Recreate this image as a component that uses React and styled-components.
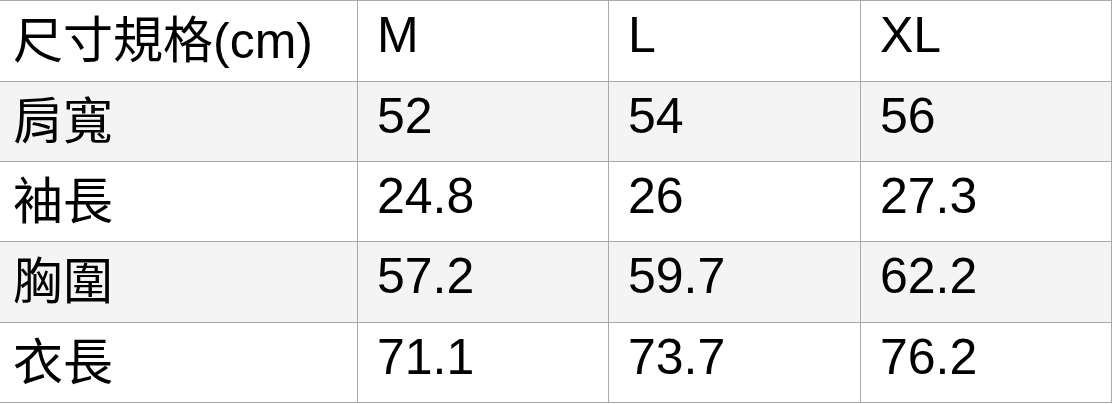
import React from "react";
import styled, { createGlobalStyle } from "styled-components";

const Global = createGlobalStyle`
  html, body { margin: 0; padding: 0; background: #ffffff; }
  body { font-family: "Liberation Sans", "Noto Sans CJK TC", sans-serif; }
`;

const Table = styled.table`
  border-collapse: separate;
  border-spacing: 0;
  table-layout: fixed;
  width: 1112px;
  color: #000;
  font-size: 50px;
`;

const Col = styled.col`
  width: ${(p) => p.$w}px;
`;

const Row = styled.tr`
  background: ${(p) => (p.$striped ? "#f4f4f4" : "#ffffff")};
`;

const Cell = styled.td`
  box-sizing: border-box;
  height: ${(p) => p.$h}px;
  padding: 0 0 ${(p) => (p.$label ? 0 : 12)}px ${(p) => (p.$label ? 13 : 19)}px;
  border-right: 1px solid #a9a9a9;
  border-bottom: 1px solid #a9a9a9;
  border-top: ${(p) => (p.$first ? "1px solid #a9a9a9" : "none")};
  vertical-align: middle;
  line-height: 60px;
  white-space: nowrap;
  font-family: ${(p) =>
    p.$label
      ? '"Liberation Sans", "Noto Sans CJK TC", sans-serif'
      : '"Liberation Sans", sans-serif'};
`;

const rows = [
  ["尺寸規格(cm)", "M", "L", "XL"],
  ["肩寬", "52", "54", "56"],
  ["袖長", "24.8", "26", "27.3"],
  ["胸圍", "57.2", "59.7", "62.2"],
  ["衣長", "71.1", "73.7", "76.2"],
];

const heights = [82, 80, 80, 81, 80];
const widths = [358, 251, 252, 251];

export default function App() {
  return (
    <>
      <Global />
      <Table>
        <colgroup>
          {widths.map((w, i) => (
            <Col key={i} $w={w} />
          ))}
        </colgroup>
        <tbody>
          {rows.map((r, ri) => (
            <Row key={ri} $striped={ri % 2 === 1}>
              {r.map((c, ci) => (
                <Cell
                  key={ci}
                  $h={heights[ri]}
                  $label={ci === 0}
                  $first={ri === 0}
                >
                  {c}
                </Cell>
              ))}
            </Row>
          ))}
        </tbody>
      </Table>
    </>
  );
}
